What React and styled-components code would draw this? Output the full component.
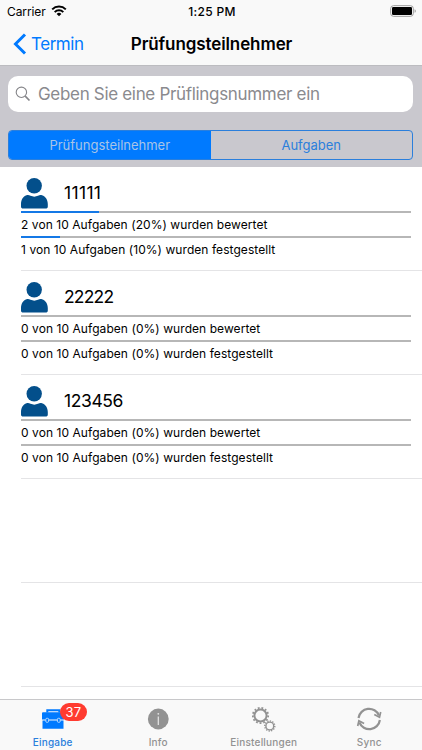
import React, { useState } from "react";
import styled, { createGlobalStyle } from "styled-components";

const colors = {
  blue: "#007aff",
  softBlue: "#2b7fdc",
  navy: "#034f8b",
  bar: "#f9f9f9",
  toolbar: "#c9c8ce",
  track: "#b7b7b7",
  gray: "#929292",
  red: "#ff3b30",
};

const participants = [
  { id: "11111", rated: 2, settled: 1, total: 10, spacing: 0.35 },
  { id: "22222", rated: 0, settled: 0, total: 10, spacing: -0.8 },
  { id: "123456", rated: 0, settled: 0, total: 10, spacing: -0.4 },
];

const WifiIcon = () => (
  <svg width="16" height="12" viewBox="0 0 16 12">
    <g fill="none" stroke="#000" strokeWidth="2">
      <path d="M1.2 4.4a9.7 9.7 0 0 1 13.6 0" />
      <path d="M3.7 7.1a6.1 6.1 0 0 1 8.6 0" />
    </g>
    <path d="M8 11.3 5.6 8.9a3.4 3.4 0 0 1 4.8 0z" />
  </svg>
);

const BatteryIcon = () => (
  <svg width="27" height="12" viewBox="0 0 27 12">
    <rect x="0.7" y="0.7" width="22.6" height="10.6" rx="2.8" fill="#fff" stroke="#999" />
    <rect x="2" y="2" width="20" height="8" rx="1.3" />
    <path d="M24.6 4.2c1.6.5 1.6 3.1 0 3.6z" fill="#999" />
  </svg>
);

const BackIcon = () => (
  <svg width="14" height="22" viewBox="0 0 14 22">
    <path d="M12 1.5 2.5 11l9.5 9.5" fill="none" stroke={colors.blue} strokeWidth="3" />
  </svg>
);

const SearchIcon = () => (
  <svg width="16" height="16" viewBox="0 0 16 16" fill="none" stroke="#858589">
    <circle cx="6.4" cy="6.3" r="5.2" strokeWidth="1.1" />
    <path d="m10.2 10.2 4.3 4.3" strokeWidth="1.7" />
  </svg>
);

const PersonIcon = () => (
  <svg width="27" height="31" viewBox="0 0 27 31" fill={colors.navy}>
    <circle cx="13.2" cy="7.8" r="7.7" />
    <path d="M5.5 17.200c1.700-.5 2.600-.1 4 .6 2.600 1.100 5 1.100 7.500 0 1.400-.7 2.300-1.100 4-.6 3.600 1 5.800 4.600 5.800 9v2.200c0 1.400-.8 2.200-2.200 2.200H2.200C.8 30.600 0 29.800 0 28.400v-2.200c0-4.400 2-8 5.500-9z" />
  </svg>
);

const BriefcaseIcon = () => (
  <svg width="24" height="26" viewBox="0 0 24 26">
    <path d="M6.3 6.500V4.200h12v2.300" fill="none" stroke={colors.blue} strokeWidth="2" />
    <path d="M2 6.300h20q1 0 1 1v6.200H1V7.300q0-1 1-1zM1.500 14.500h21v8.200h-21z" fill={colors.blue} />
    <g fill={colors.blue} stroke="#b9dcff" strokeWidth="1">
      <rect x="4.800" y="12.300" width="2.800" height="4" rx="1" />
      <rect x="16.400" y="12.300" width="2.800" height="4" rx="1" />
    </g>
  </svg>
);

const InfoIcon = () => (
  <svg width="24" height="26" viewBox="0 0 24 26">
    <circle cx="12.3" cy="13" r="10.4" fill={colors.gray} />
    <path d="M12.3 10.500v8.500" stroke="#e6e6e6" strokeWidth="1.200" />
    <circle cx="12.3" cy="7.800" r="0.900" fill="#e6e6e6" />
  </svg>
);

const GearsIcon = () => (
  <svg width="24" height="26" viewBox="0 0 24 26" fill="none" stroke={colors.gray}>
    <circle cx="8.5" cy="9.5" r="6.1" strokeWidth="2" />
    <circle cx="8.5" cy="9.5" r="7.7" strokeWidth="1.8" pathLength="52" strokeDasharray="2 2" />
    <circle cx="17.8" cy="20" r="3.9" strokeWidth="1.4" />
    <circle cx="17.8" cy="20" r="5" strokeWidth="1.4" pathLength="48" strokeDasharray="2 2" />
  </svg>
);

const SyncIcon = () => (
  <svg width="26" height="26" viewBox="0 0 26 26" fill="none" stroke={colors.gray}>
    <path d="M2.500 12A10.700 10.700 0 0 1 23 9.500" strokeWidth="2.200" />
    <path d="M23.900 14A10.700 10.700 0 0 1 3.400 16.500" strokeWidth="2.200" />
    <path d="m18.300 8.500 5.200 2.700 1.200-5.200" strokeWidth="1.700" />
    <path d="m8.100 17.500-5.200-2.700-1.200 5.200" strokeWidth="1.700" />
  </svg>
);

const tabs = [
  { label: "Eingabe", Icon: BriefcaseIcon, badge: 37 },
  { label: "Info", Icon: InfoIcon },
  { label: "Einstellungen", Icon: GearsIcon },
  { label: "Sync", Icon: SyncIcon },
];

const percent = (value, total) => Math.round((value / total) * 100);

const TaskProgress = ({ value, total, verb }) => {
  const done = percent(value, total);
  return (
    <>
      <Track>
        <Fill style={{ width: `${done}%` }} />
      </Track>
      <Caption>
        {value} von {total} Aufgaben ({done}%) wurden {verb}
      </Caption>
    </>
  );
};

const App = () => {
  const [segment, setSegment] = useState(0);
  const [activeTab, setActiveTab] = useState("Eingabe");

  return (
    <Screen>
      <GlobalStyle />
      <Header>
        <StatusBar>
          <Carrier>
            Carrier <WifiIcon />
          </Carrier>
          <Clock>1:25 PM</Clock>
          <BatteryIcon />
        </StatusBar>
        <NavBar>
          <BackButton>
            <BackIcon />
            Termin
          </BackButton>
          <Title>Prüfungsteilnehmer</Title>
        </NavBar>
      </Header>
      <Toolbar>
        <SearchField>
          <SearchIcon />
          <SearchInput placeholder="Geben Sie eine Prüflingsnummer ein" />
        </SearchField>
        <Segments>
          {["Prüfungsteilnehmer", "Aufgaben"].map((label, index) => (
            <Segment key={label} $active={segment === index} onClick={() => setSegment(index)}>
              {label}
            </Segment>
          ))}
        </Segments>
      </Toolbar>
      <List>
        {participants.map((item) => (
          <Row key={item.id}>
            <Person>
              <PersonIcon />
              <Name $spacing={item.spacing}>{item.id}</Name>
            </Person>
            <TaskProgress value={item.rated} total={item.total} verb="bewertet" />
            <TaskProgress value={item.settled} total={item.total} verb="festgestellt" />
          </Row>
        ))}
        <Row />
        <Row />
      </List>
      <TabBar>
        {tabs.map(({ label, Icon, badge }) => (
          <Tab key={label} $active={activeTab === label} onClick={() => setActiveTab(label)}>
            <Icon />
            {badge && <Badge>{badge}</Badge>}
            <span>{label}</span>
          </Tab>
        ))}
      </TabBar>
    </Screen>
  );
};

const GlobalStyle = createGlobalStyle`
  * {
    box-sizing: border-box;
  }
  body {
    margin: 0;
    font-family: Inter, "Liberation Sans", sans-serif;
  }
  button {
    font-family: inherit;
    border: none;
    padding: 0;
    background: none;
  }
  svg {
    flex: none;
  }
`;
const Screen = styled.div`
  display: flex;
  flex-direction: column;
  width: 422px;
  height: 750px;
  overflow: hidden;
  background: #fff;
  color: #000;
`;
const Header = styled.header`
  height: 66px;
  flex: none;
  background: ${colors.bar};
  border-bottom: 1px solid #bcbcc0;
`;
const StatusBar = styled.div`
  display: grid;
  grid-template-columns: 1fr auto 1fr;
  align-items: center;
  height: 22px;
  padding: 0 5px 0 7px;
  font-size: 12px;

  > :last-child {
    justify-self: end;
  }
`;
const Carrier = styled.div`
  display: flex;
  align-items: center;
  gap: 5px;
  letter-spacing: -0.1px;
`;
const Clock = styled.div`
  font-weight: 500;
  letter-spacing: 0.3px;
`;
const NavBar = styled.div`
  display: grid;
  grid-template-columns: 1fr auto 1fr;
  align-items: center;
  height: 43px;
  padding: 0 12px 0 13px;
`;
const BackButton = styled.button`
  display: flex;
  align-items: center;
  gap: 4px;
  color: ${colors.blue};
  font-size: 17px;
  letter-spacing: -0.45px;
`;
const Title = styled.h1`
  margin: 0;
  font-size: 17px;
  font-weight: 600;
  letter-spacing: -0.1px;
`;
const Toolbar = styled.div`
  height: 101px;
  flex: none;
  padding: 10px 9px 0 8px;
  background: ${colors.toolbar};
`;
const SearchField = styled.label`
  display: flex;
  align-items: center;
  gap: 7px;
  height: 36px;
  padding: 0 7px;
  border-radius: 10px;
  background: #fff;
`;
const SearchInput = styled.input`
  flex: 1;
  min-width: 0;
  padding: 0;
  border: none;
  outline: none;
  background: none;
  font-family: inherit;
  font-size: 17px;
  letter-spacing: -0.32px;

  &::placeholder {
    color: #8a8a8e;
    opacity: 1;
  }
`;
const Segments = styled.div`
  display: flex;
  height: 30px;
  margin-top: 18px;
  border: 1px solid ${colors.softBlue};
  border-radius: 4px;
  overflow: hidden;
`;
const Segment = styled.button`
  flex: 1;
  font-size: 13px;
  letter-spacing: 0;
  background: ${(props) => (props.$active ? colors.blue : "transparent")};
  color: ${(props) => (props.$active ? "#a9c4e6" : colors.softBlue)};
`;
const List = styled.main`
  flex: 1;
  min-height: 0;
  overflow: hidden;
  padding-left: 21px;
`;
const Row = styled.section`
  height: 104px;
  padding: 11px 11px 0 0;
  border-bottom: 1px solid #e4e4e6;
`;
const Person = styled.div`
  display: flex;
  gap: 16px;
  height: 33px;
`;
const Name = styled.div`
  font-size: 17.5px;
  line-height: 29px;
  letter-spacing: ${(props) => props.$spacing}px;
`;
const Track = styled.div`
  height: 2px;
  background: ${colors.track};
`;
const Fill = styled.div`
  height: 100%;
  background: #1478e6;
`;
const Caption = styled.div`
  height: 23px;
  font-size: 12px;
  line-height: 23px;
  letter-spacing: 0.06px;
  white-space: nowrap;
`;
const TabBar = styled.nav`
  display: grid;
  grid-template-columns: repeat(4, 1fr);
  height: 51px;
  flex: none;
  background: ${colors.bar};
  border-top: 1px solid #c8c8ca;
`;
const Tab = styled.button`
  position: relative;
  display: flex;
  flex-direction: column;
  align-items: center;
  padding-top: 6px;
  gap: 4px;
  font-size: 10px;
  font-weight: 500;
  letter-spacing: 0.2px;
  color: ${(props) => (props.$active ? colors.softBlue : colors.gray)};
`;
const Badge = styled.div`
  position: absolute;
  top: 3px;
  left: 60px;
  width: 27px;
  height: 18px;
  border-radius: 9px;
  background: ${colors.red};
  color: #fff;
  font-size: 13px;
  font-weight: 400;
  line-height: 18px;
  text-align: center;
`;

export default App;
